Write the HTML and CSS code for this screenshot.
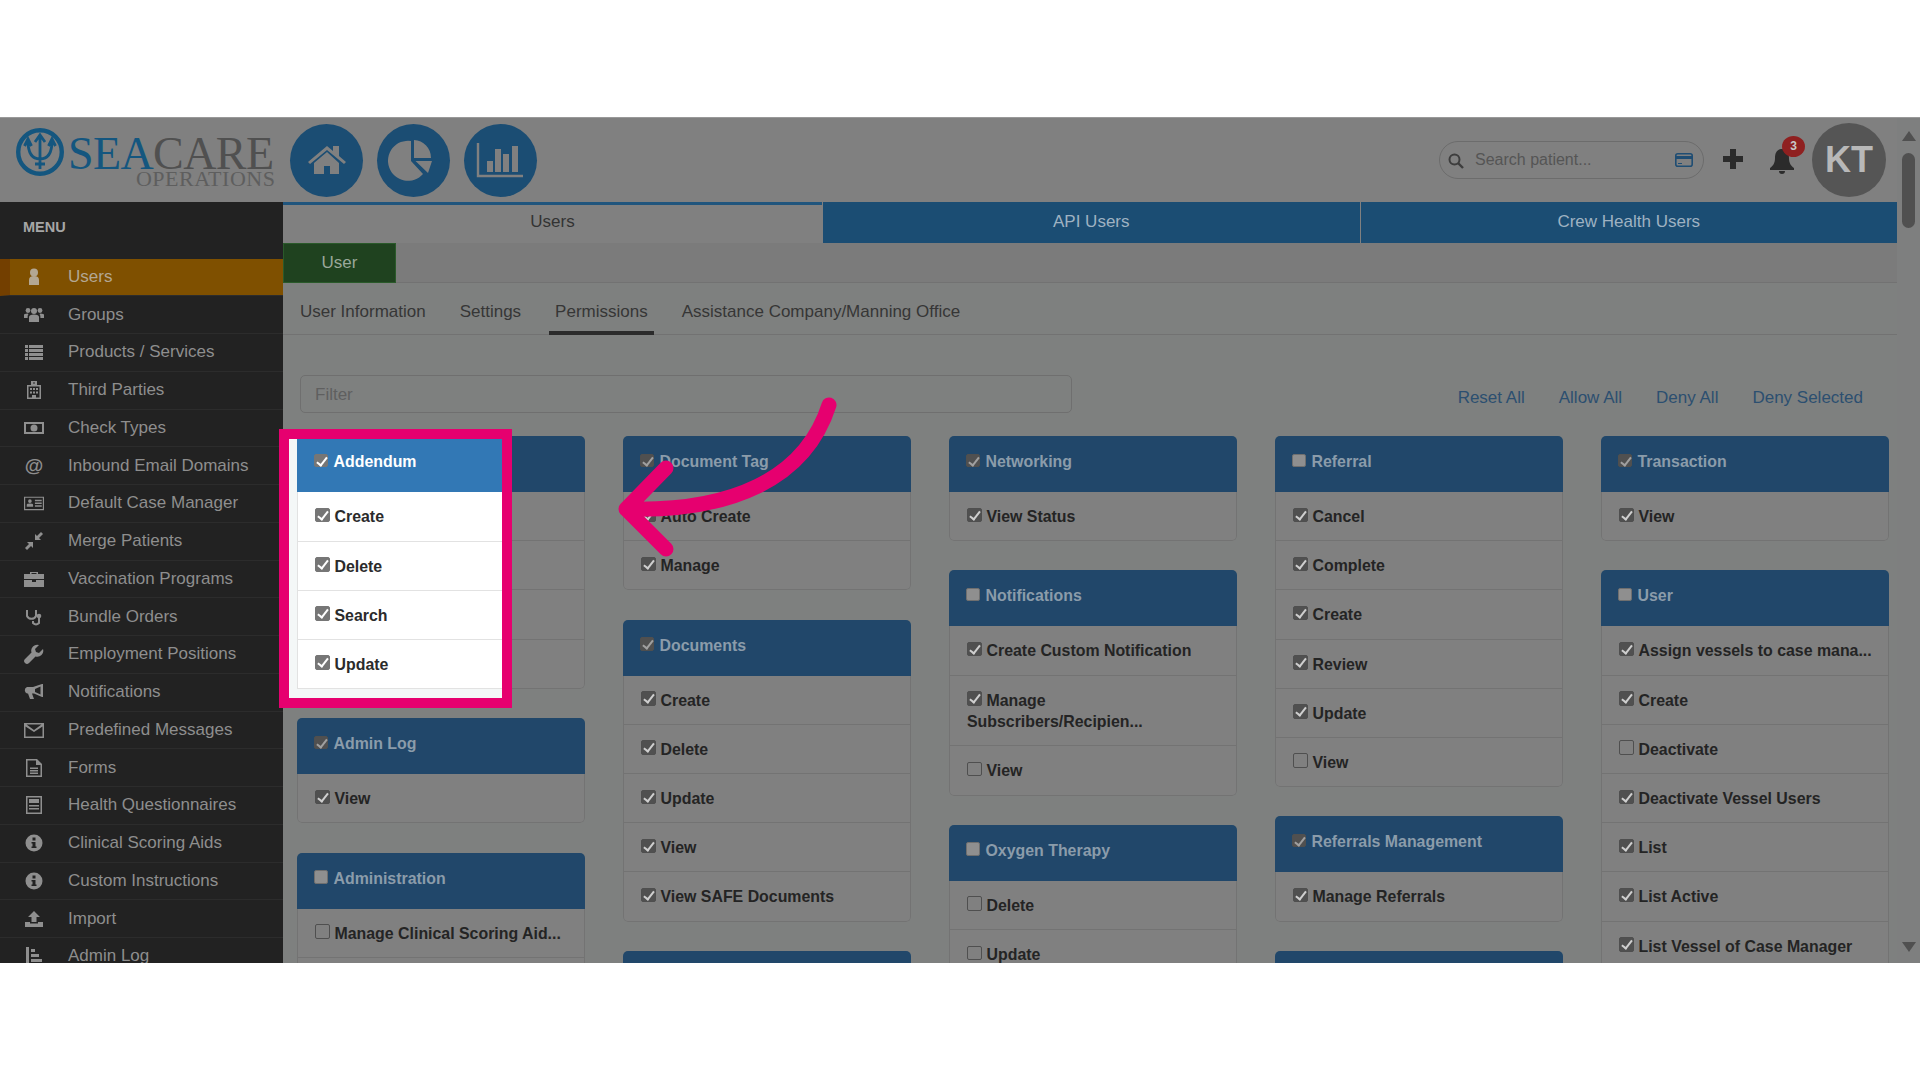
FILE: index.html
```html
<!DOCTYPE html>
<html lang="en">
<head>
    <meta charset="UTF-8">
    <title>Users - Permissions</title>
    <link rel="stylesheet" href="styles.css">
</head>
<body>
<div class="frame">
    <div class="main">
        <div class="topbar">
            <div class="logo">
                <svg class="logo-mark" viewBox="0 0 48 48" width="48" height="48">
                    <circle cx="24" cy="24" r="21.800" fill="none" stroke="#14567f" stroke-width="4.400"/>
                    <path d="M24 8V41M12 13C12 26 17 31 24 31C31 31 36 26 36 13M19 14L24 7L29 14M8.500 18L12 11L15.500 18M32.500 18L36 11L39.500 18M19 36H29" fill="none" stroke="#14567f" stroke-width="2.800"/>
                </svg>
                <div class="logo-text">
                    <div class="logo-name"><span class="sea">SEA</span>CARE</div>
                    <div class="logo-sub">OPERATIONS</div>
                </div>
            </div>
            <div class="round-links">
                <a class="round">
                    <svg viewBox="0 0 73 73"><path d="M18 38L37 22L43 27V22H49V32L56 38L54 40L37 26L20 40ZM24 39L37 28L49 39V50H40V42H34V50H24Z" fill="#808080"/></svg>
                </a>
                <a class="round">
                    <svg viewBox="0 0 73 73"><path d="M34 17V37L46 50A20 20 0 1 1 34 17ZM37 16A18 18 0 0 1 54 34H37ZM38.500 37H55L51 49Z" fill="#808080"/></svg>
                </a>
                <a class="round">
                    <svg viewBox="0 0 73 73"><path d="M14 19V52H59" fill="none" stroke="#808080" stroke-width="2.400"/><path d="M23 37H29V48H23ZM31 25H37V48H31ZM39 30H45V48H39ZM48 22H54V48H48Z" fill="#808080"/></svg>
                </a>
            </div>
            <div class="top-right">
                <div class="search">
                    <svg class="search-icon" viewBox="0 0 16 16" width="16" height="16"><circle cx="6.500" cy="6.500" r="5" fill="none" stroke="#3d3d3d" stroke-width="2"/><path d="M10 10L15 15" stroke="#3d3d3d" stroke-width="2.400"/></svg>
                    <span class="search-text">Search patient...</span>
                    <svg class="card-icon" viewBox="0 0 18 14" width="18" height="14"><rect x="0.800" y="0.800" width="16.400" height="12.400" rx="2" fill="none" stroke="#1f4d73" stroke-width="1.600"/><rect x="1" y="3" width="16" height="3" fill="#1f4d73"/><path d="M3 10.500H7" stroke="#1f4d73" stroke-width="1"/></svg>
                </div>
                <svg class="plus" viewBox="0 0 22 22" width="22" height="22"><path d="M11 1V21M1 11H21" stroke="#2b2b2b" stroke-width="6"/></svg>
                <div class="bell">
                    <svg viewBox="0 0 26 28" width="26" height="28"><path d="M13 2C8 2 6 6 6 11C6 16 4 19 1 21V23H25V21C22 19 20 16 20 11C20 6 18 2 13 2ZM10 24A3 3 0 0 0 16 24Z" fill="#2b2b2b"/></svg>
                    <span class="badge">3</span>
                </div>
                <div class="avatar">KT</div>
            </div>
        </div>
        <div class="below">
            <div class="sidebar">
                <div class="menu-title">MENU</div>
                <ul class="menu">
                    <li class="active">
                        <svg viewBox="0 0 20 20"><circle cx="10" cy="5.500" r="4"/><path d="M5 18V13Q5 9 10 9Q15 9 15 13V18Z"/></svg>
                        Users</li>
                    <li>
                        <svg viewBox="0 0 20 20"><circle cx="10" cy="6" r="3"/><circle cx="4" cy="5.500" r="2.400"/><circle cx="16" cy="5.500" r="2.400"/><path d="M5 17V12Q5 9.500 10 9.500Q15 9.500 15 12V17ZM0 13V10Q0 8.500 3.500 8.500L4.500 9Q3.600 10 3.600 12V13ZM20 13V10Q20 8.500 16.500 8.500L15.500 9Q16.400 10 16.400 12V13Z"/></svg>
                        Groups</li>
                    <li>
                        <svg viewBox="0 0 20 20"><path d="M1 3H4V6H1ZM5 3H19V6H5ZM1 7H4V10H1ZM5 7H19V10H5ZM1 11H4V14H1ZM5 11H19V14H5ZM1 15H4V18H1ZM5 15H19V18H5Z"/></svg>
                        Products / Services</li>
                    <li>
                        <svg viewBox="0 0 20 20"><path fill-rule="evenodd" d="M3 5H7V1H13V5H17V19H3ZM4.500 6.500V17.500H8V15H12V17.500H15.500V6.500ZM9 2.500V3.500H11V2.500ZM6 8H8V10H6ZM9 8H11V10H9ZM12 8H14V10H12ZM6 11.500H8V13.500H6ZM9 11.500H11V13.500H9ZM12 11.500H14V13.500H12Z"/></svg>
                        Third Parties</li>
                    <li>
                        <svg viewBox="0 0 20 20"><path fill-rule="evenodd" d="M0 4H20V16H0ZM2 6V14H18V6ZM10 6.500A3.500 3.500 0 1 1 10 13.500A3.500 3.500 0 0 1 10 6.500Z"/></svg>
                        Check Types</li>
                    <li>
                        <span class="at">@</span>
                        Inbound Email Domains</li>
                    <li>
                        <svg viewBox="0 0 22 20"><path fill-rule="evenodd" d="M0 3H22V18H0ZM1.300 4.300V16.700H20.700V4.300ZM6.500 6A2 2 0 1 1 6.500 10A2 2 0 0 1 6.500 6ZM3 14V12Q3 10.500 6.500 10.500Q10 10.500 10 12V14ZM12 6.500H19.500V8H12ZM12 9.500H19.500V11H12ZM12 12.500H19.500V14H12Z"/></svg>
                        Default Case Manager</li>
                    <li>
                        <svg viewBox="0 0 20 20"><path d="M11 3V9H17L15 7L19 3L17 1L13 5ZM9 17V11H3L5 13L1 17L3 19L7 15Z"/></svg>
                        Merge Patients</li>
                    <li>
                        <svg viewBox="0 0 20 20"><path fill-rule="evenodd" d="M6 5V3H14V5H20V10H0V5ZM7.500 4V5H12.500V4ZM0 11H8V13H12V11H20V18H0Z"/></svg>
                        Vaccination Programs</li>
                    <li>
                        <svg viewBox="0 0 20 20"><path d="M3 3V9A5 5 0 0 0 12 9V3M9 14V16Q12 19 15 16V11" fill="none" stroke="#8f8f8f" stroke-width="2"/><circle cx="15" cy="9" r="2.300"/></svg>
                        Bundle Orders</li>
                    <li>
                        <svg viewBox="0 0 20 20"><path d="M19 5L15 9L12 8L11 5L15 1A6 6 0 0 0 7.500 8.500L1 15A2.500 2.500 0 0 0 5 19L11.500 12.500A6 6 0 0 0 19 5Z"/></svg>
                        Employment Positions</li>
                    <li>
                        <svg viewBox="0 0 20 20"><path d="M18 2H19V15H18L10 11.500H8L10 17H6L4 11.500H3A3.500 3.500 0 0 1 3 5H9ZM16.500 4.500L11 7V10L16.500 12.500Z"/></svg>
                        Notifications</li>
                    <li>
                        <svg viewBox="0 0 20 20"><path fill-rule="evenodd" d="M0 3H20V18H0ZM1.500 6.500V16.500H18.500V6.500L10 12ZM2.500 4.500L10 10L17.500 4.500Z"/></svg>
                        Predefined Messages</li>
                    <li>
                        <svg viewBox="0 0 20 20"><path fill-rule="evenodd" d="M2 1H13L18 6V19H2ZM3.500 2.500V17.500H16.500V7H12V2.500ZM6 9.500H14V11H6ZM6 12H14V13.500H6ZM6 14.500H14V16H6Z"/></svg>
                        Forms</li>
                    <li>
                        <svg viewBox="0 0 20 20"><path fill-rule="evenodd" d="M2 1H18V19H2ZM3.500 2.500V17.500H16.500V2.500ZM5 4H15V8H5ZM5 10H15V11.500H5ZM5 13H15V14.500H5Z"/></svg>
                        Health Questionnaires</li>
                    <li>
                        <svg viewBox="0 0 20 20"><path fill-rule="evenodd" d="M10 1.500A8.500 8.500 0 1 1 10 18.500A8.500 8.500 0 0 1 10 1.500ZM8.500 4.500V7.500H11.500V4.500ZM7.500 9V10.500H8.500V13.500H7.500V15H12.500V13.500H11.500V9Z"/></svg>
                        Clinical Scoring Aids</li>
                    <li>
                        <svg viewBox="0 0 20 20"><path fill-rule="evenodd" d="M10 1.500A8.500 8.500 0 1 1 10 18.500A8.500 8.500 0 0 1 10 1.500ZM8.500 4.500V7.500H11.500V4.500ZM7.500 9V10.500H8.500V13.500H7.500V15H12.500V13.500H11.500V9Z"/></svg>
                        Custom Instructions</li>
                    <li>
                        <svg viewBox="0 0 20 20"><path d="M10 2L16 8H12.500V13H7.500V8H4ZM1 13H6V14.500H14V13H19V18H1Z"/></svg>
                        Import</li>
                    <li>
                        <svg viewBox="0 0 20 20"><path d="M2 1H5V19H2ZM7 3H11V6H7ZM7 8H15V11H7ZM7 13H18V16H7ZM7 17H18V19H7Z"/></svg>
                        Admin Log</li>
                </ul>
            </div>
            <div class="content">
                <div class="user-tabs">
                    <div class="user-tab current">Users</div>
                    <div class="user-tab">API Users</div>
                    <div class="user-tab">Crew Health Users</div>
                </div>
                <div class="type-strip"><div class="type-tab">User</div></div>
                <div class="sub-nav">
                    <a>User Information</a>
                    <a>Settings</a>
                    <a class="current">Permissions</a>
                    <a>Assistance Company/Manning Office</a>
                </div>
                <div class="toolbar">
                    <div class="filter">Filter</div>
                    <div class="actions">
                        <a>Reset All</a>
                        <a>Allow All</a>
                        <a>Deny All</a>
                        <a>Deny Selected</a>
                    </div>
                </div>
                <div class="columns">
                    <div class="col">
                        <div class="panel">
                            <div class="panel-head"><span class="cb on"></span>Addendum</div>
                            <div class="row"><span class="cb on"></span>Create</div>
                            <div class="row"><span class="cb on"></span>Delete</div>
                            <div class="row"><span class="cb on"></span>Search</div>
                            <div class="row"><span class="cb on"></span>Update</div>
                        </div>
                        <div class="panel">
                            <div class="panel-head"><span class="cb on"></span>Admin Log</div>
                            <div class="row"><span class="cb on"></span>View</div>
                        </div>
                        <div class="panel">
                            <div class="panel-head"><span class="cb part"></span>Administration</div>
                            <div class="row"><span class="cb"></span>Manage Clinical Scoring Aid...</div>
                            <div class="row"></div>
                        </div>
                    </div>
                    <div class="col">
                        <div class="panel">
                            <div class="panel-head"><span class="cb on"></span>Document Tag</div>
                            <div class="row"><span class="cb on"></span>Auto Create</div>
                            <div class="row"><span class="cb on"></span>Manage</div>
                        </div>
                        <div class="panel">
                            <div class="panel-head"><span class="cb on"></span>Documents</div>
                            <div class="row"><span class="cb on"></span>Create</div>
                            <div class="row"><span class="cb on"></span>Delete</div>
                            <div class="row"><span class="cb on"></span>Update</div>
                            <div class="row"><span class="cb on"></span>View</div>
                            <div class="row"><span class="cb on"></span>View SAFE Documents</div>
                        </div>
                        <div class="panel">
                            <div class="panel-head"></div>
                        </div>
                    </div>
                    <div class="col">
                        <div class="panel">
                            <div class="panel-head"><span class="cb on"></span>Networking</div>
                            <div class="row"><span class="cb on"></span>View Status</div>
                        </div>
                        <div class="panel">
                            <div class="panel-head"><span class="cb part"></span>Notifications</div>
                            <div class="row"><span class="cb on"></span>Create Custom Notification</div>
                            <div class="row"><span class="cb on"></span>Manage<br>Subscribers/Recipien...</div>
                            <div class="row"><span class="cb"></span>View</div>
                        </div>
                        <div class="panel">
                            <div class="panel-head"><span class="cb part"></span>Oxygen Therapy</div>
                            <div class="row"><span class="cb"></span>Delete</div>
                            <div class="row"><span class="cb"></span>Update</div>
                        </div>
                    </div>
                    <div class="col">
                        <div class="panel">
                            <div class="panel-head"><span class="cb part"></span>Referral</div>
                            <div class="row"><span class="cb on"></span>Cancel</div>
                            <div class="row"><span class="cb on"></span>Complete</div>
                            <div class="row"><span class="cb on"></span>Create</div>
                            <div class="row"><span class="cb on"></span>Review</div>
                            <div class="row"><span class="cb on"></span>Update</div>
                            <div class="row"><span class="cb"></span>View</div>
                        </div>
                        <div class="panel">
                            <div class="panel-head"><span class="cb on"></span>Referrals Management</div>
                            <div class="row"><span class="cb on"></span>Manage Referrals</div>
                        </div>
                        <div class="panel">
                            <div class="panel-head"></div>
                        </div>
                    </div>
                    <div class="col">
                        <div class="panel">
                            <div class="panel-head"><span class="cb on"></span>Transaction</div>
                            <div class="row"><span class="cb on"></span>View</div>
                        </div>
                        <div class="panel">
                            <div class="panel-head"><span class="cb part"></span>User</div>
                            <div class="row"><span class="cb on"></span>Assign vessels to case mana...</div>
                            <div class="row"><span class="cb on"></span>Create</div>
                            <div class="row"><span class="cb"></span>Deactivate</div>
                            <div class="row"><span class="cb on"></span>Deactivate Vessel Users</div>
                            <div class="row"><span class="cb on"></span>List</div>
                            <div class="row"><span class="cb on"></span>List Active</div>
                            <div class="row"><span class="cb on"></span>List Vessel of Case Manager</div>
                        </div>
                    </div>
                </div>
            </div>
        </div>
    </div>
    <div class="scrollbar">
        <span class="arrow-up"></span>
        <span class="thumb"></span>
        <span class="arrow-down"></span>
    </div>
</div>

<div class="spotlight">
    <div class="spot-panel">
        <div class="spot-head"><span class="cb on"></span>Addendum</div>
        <div class="spot-row"><span class="cb on"></span>Create</div>
        <div class="spot-row"><span class="cb on"></span>Delete</div>
        <div class="spot-row"><span class="cb on"></span>Search</div>
        <div class="spot-row"><span class="cb on"></span>Update</div>
    </div>
</div>

<svg class="pointer" viewBox="0 0 260 180" width="260" height="180">
    <path d="M229 20C205 95 130 127 26 124M66 83L26 124L66 164" fill="none" stroke="#e6006f" stroke-width="15" stroke-linecap="round" stroke-linejoin="round"/>
</svg>
</body>
</html>
```
FILE: styles.css
```css
*{
    margin: 0;
    padding: 0;
    box-sizing: border-box;
}
body{
    position: relative;
    height: 1080px;
    overflow: hidden;
    background: #fff;
    font-family: "Liberation Sans", Arial, sans-serif;
    font-size: 17px;
}
ul{
    list-style: none;
}
.frame{
    display: flex;
    height: 846px;
    margin-top: 117px;
    overflow: hidden;
    background: #7f8080;
    border-top: 1px solid #999;
}
.main{
    width: 1897px;
    display: flex;
    flex-direction: column;
}

/* top bar */
.topbar{
    height: 84px;
    flex: none;
    display: flex;
    align-items: center;
    background: #808080;
    padding-left: 16px;
}
.logo{
    display: flex;
    width: 257px;
    height: 64px;
    gap: 4px;
    align-items: flex-start;
    margin-top: -2px;
}
.logo-mark{
    flex: none;
    margin-top: 1px;
}
.logo-text{
    font-family: "Liberation Serif", "Times New Roman", serif;
    color: #505050;
    text-align: right;
}
.logo-name{
    font-size: 46px;
    line-height: 46px;
    letter-spacing: -0.6px;
    white-space: nowrap;
    margin-top: 4px;
}
.sea{
    color: #14567f;
}
.logo-sub{
    font-size: 22px;
    line-height: 20px;
    letter-spacing: 0.5px;
    color: #5e5e5e;
    margin: -8px -2px 0 0;
}
.round-links{
    display: flex;
    gap: 14px;
    margin-left: 17px;
}
.round{
    display: block;
    width: 73px;
    height: 73px;
    border-radius: 50%;
    background: #1b4d73;
}
.round svg{
    display: block;
}
.top-right{
    margin-left: auto;
    display: flex;
    align-items: center;
    padding-right: 11px;
}
.search{
    width: 265px;
    height: 38px;
    display: flex;
    align-items: center;
    border: 1px solid #6c6c6c;
    border-radius: 19px;
    padding: 0 10px 0 8px;
    margin-right: 18px;
    font-size: 16px;
}
.search-icon{
    margin-top: 2px;
}
.search-text{
    margin-left: 11px;
    color: #555;
    flex: 1;
}
.plus{
    margin-right: 25px;
    margin-top: -2px;
}
.bell{
    position: relative;
    width: 26px;
    height: 28px;
    margin-right: 17px;
    margin-top: 2px;
}
.bell svg{
    display: block;
}
.badge{
    position: absolute;
    left: 13px;
    top: -11px;
    width: 23px;
    height: 21px;
    border-radius: 50%;
    background: #8f2020;
    color: #c8c8c8;
    font-size: 12px;
    font-weight: bold;
    line-height: 21px;
    text-align: center;
}
.avatar{
    width: 74px;
    height: 74px;
    border-radius: 50%;
    background: #555;
    color: #b8b8b8;
    font-size: 36px;
    font-weight: bold;
    line-height: 74px;
    text-align: center;
}

/* sidebar */
.below{
    display: flex;
    flex: 1;
    min-height: 0;
}
.sidebar{
    width: 283px;
    flex: none;
    background: #222;
    overflow: hidden;
}
.menu-title{
    height: 56.5px;
    padding: 17px 0 0 23px;
    color: #a6a6a6;
    font-size: 14.5px;
    font-weight: bold;
    line-height: 16px;
}
.menu li{
    height: 37.75px;
    display: flex;
    align-items: center;
    gap: 24px;
    padding-left: 24px;
    color: #8e8e8e;
    font-size: 17px;
    border-bottom: 1px solid #2c2c2c;
    white-space: nowrap;
}
.menu li svg{
    width: 20px;
    height: 20px;
    flex: none;
    fill: #8f8f8f;
}
.menu li.active{
    background: #7f5000;
    border-left: 10px solid #733f00;
    padding-left: 14px;
    color: #b3a793;
}
.menu li.active svg{
    fill: #b3a793;
}
.at{
    width: 20px;
    flex: none;
    font-size: 19px;
    font-weight: bold;
    text-align: center;
}

/* content */
.content{
    flex: 1;
    min-width: 0;
    background: #7e807f;
}
.user-tabs{
    display: flex;
    height: 41px;
    background: #808080;
}
.user-tab{
    flex: 1;
    background: #1b4d73;
    color: #9fb2c2;
    margin-left: 1px;
    line-height: 40px;
    text-align: center;
}
.user-tab.current{
    flex: none;
    width: 539px;
    margin-left: 0;
    background: #808080;
    border-top: 3px solid #20557d;
    line-height: 34px;
    color: #333;
}
.type-strip{
    height: 40px;
    background: #7b7b7b;
    border-bottom: 1px solid #727272;
}
.type-tab{
    width: 113px;
    height: 40px;
    background: #1f421f;
    border: 1px solid #2a5a2a;
    color: #9aa89a;
    line-height: 37px;
    text-align: center;
}
.sub-nav{
    display: flex;
    height: 52px;
    gap: 22px;
    padding-left: 11px;
    border-bottom: 1px solid #727272;
    color: #363636;
}
.sub-nav a{
    padding: 0 6px;
    line-height: 58px;
    height: 52px;
}
.sub-nav a.current{
    border-bottom: 4px solid #2b2b2b;
}
.toolbar{
    display: flex;
    align-items: center;
    justify-content: space-between;
    margin-top: 40px;
    padding: 0 34px 0 17px;
}
.filter{
    width: 772px;
    height: 38px;
    padding-left: 14px;
    border: 1px solid #6f6f6f;
    border-radius: 5px;
    color: #5f5f5f;
    line-height: 37px;
}
.actions{
    display: flex;
    gap: 34px;
    color: #2c4f70;
    margin-top: 7px;
}
.columns{
    display: flex;
    gap: 38px;
    margin-top: 23px;
    padding-left: 14px;
}
.col{
    width: 288px;
    flex: none;
}
.panel{
    margin-bottom: 29.3px;
    border-radius: 5px;
    overflow: hidden;
}
.panel-head{
    height: 56px;
    padding: 15px 0 0 17px;
    background: #21476a;
    color: #8b9caa;
    font-size: 15.9px;
    font-weight: bold;
    line-height: 21px;
    white-space: nowrap;
}
.row{
    min-height: 49.2px;
    padding: 14px 0 12.6px 17px;
    border: 1px solid #737373;
    border-top: 0;
    background: #808080;
    color: #242424;
    font-size: 15.9px;
    font-weight: bold;
    line-height: 21.6px;
    white-space: nowrap;
}
.panel .row:last-child{
    border-radius: 0 0 5px 5px;
}

/* checkboxes */
.cb{
    position: relative;
    display: inline-block;
    width: 14.5px;
    height: 14.5px;
    margin-right: 5px;
    vertical-align: 0;
    border-radius: 2px;
    border: 1px solid #4f4f4f;
}
.cb.on{
    background: #505050;
}
.cb.on::after{
    content: "";
    position: absolute;
    left: 4px;
    top: 0;
    width: 4px;
    height: 9px;
    border: solid #cfcfcf;
    border-width: 0 2px 2px 0;
    transform: rotate(38deg);
}
.panel-head .cb{
    width: 13.5px;
    height: 13.5px;
    margin-right: 6px;
}
.panel-head .cb.part{
    background: #8f8f8f;
    border-color: #6f6f6f;
}
.panel-head .cb.on::after{
    border-color: #a0a0a0;
}

/* scrollbar */
.scrollbar{
    position: relative;
    width: 23px;
    flex: none;
    background: #7e7f7f;
}
.arrow-up, .arrow-down{
    position: absolute;
    left: 5px;
    width: 0;
    height: 0;
    border-left: 7px solid transparent;
    border-right: 7px solid transparent;
}
.arrow-up{
    top: 13px;
    border-bottom: 10px solid #505050;
}
.arrow-down{
    top: 824px;
    border-top: 10px solid #505050;
}
.thumb{
    position: absolute;
    left: 5px;
    top: 35px;
    width: 13px;
    height: 75px;
    border-radius: 7px;
    background: #505050;
}

/* callout on top of the dimmed page */
.spotlight{
    position: absolute;
    left: 279px;
    top: 429px;
    width: 233px;
    height: 279px;
    border: 10px solid #e6006f;
    background: #f4f7f7;
    padding-left: 8px;
    overflow: hidden;
}
.spot-head{
    height: 53.4px;
    padding: 12px 0 0 17px;
    background: #3278b5;
    color: #fff;
    font-size: 15.9px;
    font-weight: bold;
    line-height: 21px;
    white-space: nowrap;
}
.spot-row{
    height: 49.2px;
    padding: 14px 0 0 17px;
    background: #fff;
    border-left: 1px solid #e2e2e2;
    border-bottom: 1px solid #e2e2e2;
    color: #2b2b2b;
    font-size: 15.9px;
    font-weight: bold;
    line-height: 21.6px;
}
.spotlight .cb.on{
    background: #767676;
    border-color: #767676;
}
.spotlight .cb.on::after{
    border-color: #fff;
}
.spot-head .cb{
    width: 13.5px;
    height: 13.5px;
    margin-right: 6px;
}
.pointer{
    position: absolute;
    left: 600px;
    top: 385px;
    overflow: visible;
}
```
